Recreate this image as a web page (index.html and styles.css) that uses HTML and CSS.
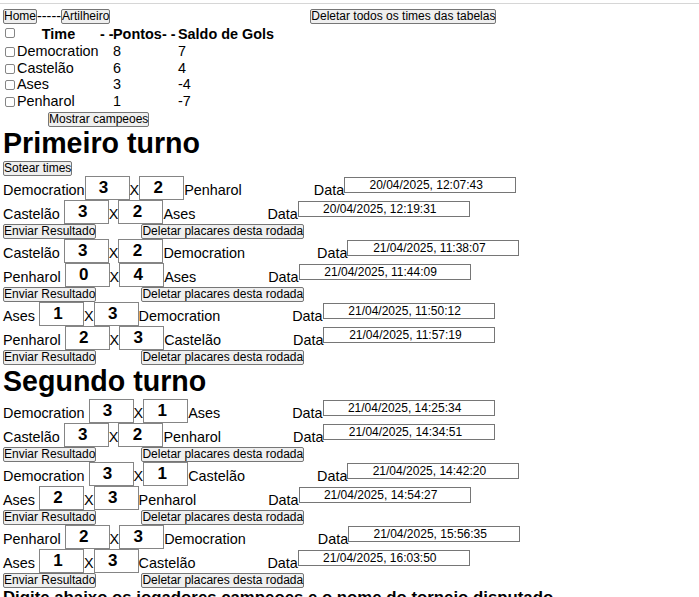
FILE: index.html
```html
<!DOCTYPE html>
<html lang="pt-BR">
<head>
<meta charset="utf-8">
<title>Campeonato</title>
<link rel="stylesheet" href="styles.css">
</head>
<body>
<div class="topline"></div>
<main class="page">
  <nav class="nav">
    <button class="btn">Home</button><span class="sep">-----</span><button class="btn">Artilheiro</button>
    <button class="btn btn-clear">Deletar todos os times das tabelas</button>
  </nav>

  <table class="standings">
    <colgroup>
      <col class="c-name"><col class="c-dash1"><col class="c-pts"><col class="c-dash2"><col class="c-sg">
    </colgroup>
    <thead>
      <tr><th class="th-time"><span class="check check-head"></span>Time</th><th>- -</th><th>Pontos</th><th>- -</th><th>Saldo de Gols</th></tr>
    </thead>
    <tbody>
      <tr><td><span class="check"></span>Democration</td><td></td><td>8</td><td></td><td>7</td></tr>
      <tr><td><span class="check"></span>Castelão</td><td></td><td>6</td><td></td><td>4</td></tr>
      <tr><td><span class="check"></span>Ases</td><td></td><td>3</td><td></td><td>-4</td></tr>
      <tr><td><span class="check"></span>Penharol</td><td></td><td>1</td><td></td><td>-7</td></tr>
    </tbody>
  </table>
  <button class="btn btn-champions">Mostrar campeoes</button>

  <section class="turn">
    <h1 class="turn-title">Primeiro turno</h1>
    <button class="btn btn-draw">Sotear times</button>

    <div class="round">
      <div class="match"><span class="team home flush">Democration</span><input class="score" value="3"><span class="vs">X</span><input class="score" value="2"><span class="team">Penharol</span><span class="label">Data</span><input class="date" value="20/04/2025, 12:07:43"></div>
      <div class="match"><span class="team home">Castelão</span><input class="score" value="3"><span class="vs">X</span><input class="score" value="2"><span class="team">Ases</span><span class="label">Data</span><input class="date" value="20/04/2025, 12:19:31"></div>
      <div class="actions"><button class="btn">Enviar Resultado</button><button class="btn btn-delete">Deletar placares desta rodada</button></div>
    </div>

    <div class="round">
      <div class="match"><span class="team home">Castelão</span><input class="score" value="3"><span class="vs">X</span><input class="score" value="2"><span class="team">Democration</span><span class="label">Data</span><input class="date" value="21/04/2025, 11:38:07"></div>
      <div class="match"><span class="team home">Penharol</span><input class="score" value="0"><span class="vs">X</span><input class="score" value="4"><span class="team">Ases</span><span class="label">Data</span><input class="date" value="21/04/2025, 11:44:09"></div>
      <div class="actions"><button class="btn">Enviar Resultado</button><button class="btn btn-delete">Deletar placares desta rodada</button></div>
    </div>

    <div class="round">
      <div class="match"><span class="team home">Ases</span><input class="score" value="1"><span class="vs">X</span><input class="score" value="3"><span class="team">Democration</span><span class="label">Data</span><input class="date" value="21/04/2025, 11:50:12"></div>
      <div class="match"><span class="team home">Penharol</span><input class="score" value="2"><span class="vs">X</span><input class="score" value="3"><span class="team">Castelão</span><span class="label">Data</span><input class="date" value="21/04/2025, 11:57:19"></div>
      <div class="actions"><button class="btn">Enviar Resultado</button><button class="btn btn-delete">Deletar placares desta rodada</button></div>
    </div>
  </section>

  <section class="turn">
    <h1 class="turn-title">Segundo turno</h1>

    <div class="round">
      <div class="match"><span class="team home">Democration</span><input class="score" value="3"><span class="vs">X</span><input class="score" value="1"><span class="team">Ases</span><span class="label">Data</span><input class="date" value="21/04/2025, 14:25:34"></div>
      <div class="match"><span class="team home">Castelão</span><input class="score" value="3"><span class="vs">X</span><input class="score" value="2"><span class="team">Penharol</span><span class="label">Data</span><input class="date" value="21/04/2025, 14:34:51"></div>
      <div class="actions"><button class="btn">Enviar Resultado</button><button class="btn btn-delete">Deletar placares desta rodada</button></div>
    </div>

    <div class="round">
      <div class="match"><span class="team home">Democration</span><input class="score" value="3"><span class="vs">X</span><input class="score" value="1"><span class="team">Castelão</span><span class="label">Data</span><input class="date" value="21/04/2025, 14:42:20"></div>
      <div class="match"><span class="team home">Ases</span><input class="score" value="2"><span class="vs">X</span><input class="score" value="3"><span class="team">Penharol</span><span class="label">Data</span><input class="date" value="21/04/2025, 14:54:27"></div>
      <div class="actions"><button class="btn">Enviar Resultado</button><button class="btn btn-delete">Deletar placares desta rodada</button></div>
    </div>

    <div class="round">
      <div class="match"><span class="team home">Penharol</span><input class="score" value="2"><span class="vs">X</span><input class="score" value="3"><span class="team">Democration</span><span class="label">Data</span><input class="date" value="21/04/2025, 15:56:35"></div>
      <div class="match"><span class="team home">Ases</span><input class="score" value="1"><span class="vs">X</span><input class="score" value="3"><span class="team">Castelão</span><span class="label">Data</span><input class="date" value="21/04/2025, 16:03:50"></div>
      <div class="actions"><button class="btn">Enviar Resultado</button><button class="btn btn-delete">Deletar placares desta rodada</button></div>
    </div>
  </section>

  <h3 class="prompt">Digite abaixo os jogadores campeoes e o nome do torneio disputado</h3>
</main>
</body>
</html>
```

FILE: styles.css
```css
* { box-sizing: border-box; }

html, body {
  margin: 0;
  background: #fff;
}

body {
  font-family: "Liberation Sans", Arial, sans-serif;
  font-size: 14.4px;
  color: #000;
}

.topline {
  margin-top: 3px;
  border-top: 1px solid #d6d6d6;
}

.page {
  padding: 0 3px;
}

/* buttons */
.btn {
  font: 12px/13px "Liberation Sans", Arial, sans-serif;
  height: 15px;
  padding: 0;
  margin: 0;
  border: 1px solid #767676;
  border-radius: 2px;
  background: #efefef;
  color: #000;
  white-space: nowrap;
}

/* nav */
.nav {
  display: flex;
  align-items: center;
  height: 15px;
  margin-top: 5px;
  line-height: 15px;
}

.sep { font-size: 14.4px; }

.btn-clear { margin-left: 200px; }

/* standings table */
.standings {
  margin-top: 2px;
  border-collapse: collapse;
  table-layout: fixed;
  width: 271px;
  line-height: 16.8px;
}

.standings th,
.standings td {
  padding: 0;
  text-align: left;
  white-space: nowrap;
  font-size: 14.4px;
}

.standings th { font-weight: bold; }
.standings .th-time { text-align: center; }

.c-name { width: 97px; }
.c-dash1 { width: 13px; }
.c-pts { width: 49px; }
.c-dash2 { width: 16px; }
.c-sg { width: 96px; }

.check {
  display: inline-block;
  width: 10px;
  height: 10px;
  margin: 0 2px;
  border: 1px solid #858585;
  border-radius: 2px;
  background: #fff;
  vertical-align: -1px;
}

.check-head {
  float: left;
  margin-top: 2px;
}

.btn-champions {
  display: block;
  margin: 2px 0 0 45px;
}

/* turns */
.turn-title {
  font-size: 28.6px;
  line-height: 33px;
  font-weight: bold;
  margin: 0 0 1px;
}

.btn-draw {
  display: block;
  margin-top: 1px;
}

.match {
  display: flex;
  align-items: flex-start;
  height: 24px;
  line-height: 16px;
  white-space: nowrap;
}

.team,
.vs,
.label {
  flex: none;
  padding-top: 6px;
}

.team.home { margin-right: 4px; }
.team.home.flush { margin-right: 0; }

.label { margin-left: 72px; }

.score {
  flex: none;
  width: 45px;
  height: 24px;
  margin: 0;
  padding: 1px 7px 0 0;
  border: 1px solid #858585;
  border-radius: 0;
  background: #fff;
  color: #000;
  font: bold 17px "Liberation Sans", Arial, sans-serif;
  text-align: center;
}

.date {
  flex: none;
  width: 172px;
  height: 16px;
  margin: 1px 0 0;
  padding: 0 8px 0 0;
  border: 1px solid #767676;
  border-radius: 0;
  background: #fff;
  color: #000;
  font: 12px "Liberation Sans", Arial, sans-serif;
  text-align: center;
}

.actions {
  display: flex;
  height: 15px;
}

.btn-delete { margin-left: 45px; }

.prompt {
  margin: 0;
  font-size: 16.8px;
  font-weight: bold;
}
```
